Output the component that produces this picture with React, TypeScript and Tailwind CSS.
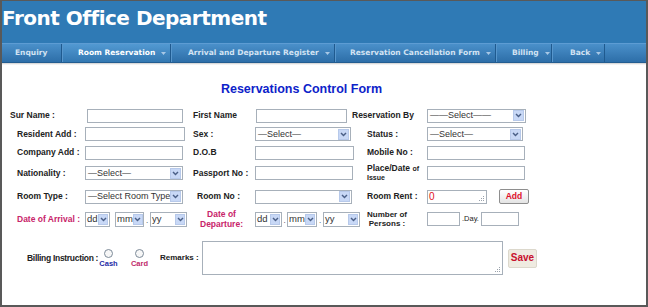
import React from "react";

const navItems = [
  { label: "Enquiry", w: "w-[60px] pl-[13px]", arrow: false, active: false, first: true },
  { label: "Room Reservation", w: "w-[109px] pl-[15px]", arrow: true, active: true, first: false },
  { label: "Arrival and Departure Register", w: "w-[164px] pl-[16px]", arrow: true, active: false, first: false },
  { label: "Reservation Cancellation Form", w: "w-[161px] pl-[14px]", arrow: true, active: false, first: false },
  { label: "Billing", w: "w-[56px] pl-[15px]", arrow: true, active: false, first: false },
  { label: "Back", w: "w-[53px] pl-[17px]", arrow: true, active: false, first: false },
];

const Chevron = () => (
  <svg width="7" height="5" viewBox="0 0 7 5">
    <path d="M1 1 L3.5 3.6 L6 1" fill="none" stroke="#4a5f86" strokeWidth="1.4" />
  </svg>
);

const Grip = () => (
  <svg width="6" height="6" viewBox="0 0 6 6" className="absolute bottom-[1px] right-[1px]">
    <rect x="4" y="0" width="1" height="1" fill="#9aa2ac" />
    <rect x="2" y="2" width="1" height="1" fill="#9aa2ac" />
    <rect x="4" y="2" width="1" height="1" fill="#9aa2ac" />
    <rect x="0" y="4" width="1" height="1" fill="#9aa2ac" />
    <rect x="2" y="4" width="1" height="1" fill="#9aa2ac" />
    <rect x="4" y="4" width="1" height="1" fill="#9aa2ac" />
  </svg>
);

const L = ({ children, className = "" }: { children: React.ReactNode; className?: string }) => (
  <div className={`shrink-0 whitespace-nowrap text-[8.5px] font-bold leading-none text-[#222] ${className}`}>{children}</div>
);

const Input = ({ className = "" }: { className?: string }) => (
  <input
    type="text"
    readOnly
    className={`h-[14px] shrink-0 border border-[#a7b0ba] bg-white outline-none ${className}`}
  />
);

const Select = ({ text, className = "" }: { text: string; className?: string }) => (
  <div className={`flex h-[14px] shrink-0 items-center border border-[#a7b0ba] bg-white ${className}`}>
    <span className="flex-1 overflow-hidden whitespace-nowrap pl-[2px] text-[9px] leading-none text-[#333]">{text}</span>
    <span className="mr-px flex h-[11px] w-[11px] shrink-0 items-center justify-center border border-[#b7c9ea] bg-[#c8d8f6]">
      <Chevron />
    </span>
  </div>
);

const DateSelect = ({ text, className = "" }: { text: string; className?: string }) => (
  <div className={`flex h-[15px] shrink-0 items-center border border-[#a7b0ba] bg-white ${className}`}>
    <span className="flex-1 whitespace-nowrap pl-[1px] text-[9.5px] leading-none text-[#333]">{text}</span>
    <span className="mr-px flex h-[11px] w-[10px] shrink-0 items-center justify-center border border-[#b7c9ea] bg-[#c8d8f6]">
      <Chevron />
    </span>
  </div>
);

const Dot = ({ className = "" }: { className?: string }) => (
  <span className={`shrink-0 self-end pb-[4px] text-center text-[8px] leading-none text-[#333] ${className}`}>.</span>
);

export default function App() {
  return (
    <div className="h-[307px] w-[648px] overflow-hidden border-x-2 border-t border-b-2 border-[#595959] bg-white font-['Liberation_Sans',Arial,sans-serif]">
      {/* Header */}
      <div className="h-[42px] bg-[#2f7ab5] pt-[7px]">
        <h1 className="font-['DejaVu_Sans',Verdana,sans-serif] text-[20px] font-bold leading-[20px] tracking-[-0.5px] text-white">
          Front Office Department
        </h1>
      </div>

      {/* Menu */}
      <div className="flex h-[20px] border-t border-b border-t-[#5d9cd3] border-b-[#235d91] bg-linear-to-b from-[#4a90ca] to-[#2d6ea8] font-['DejaVu_Sans',Verdana,sans-serif]">
        {navItems.map((n) => (
          <div
            key={n.label}
            className={`flex h-full shrink-0 items-center gap-[6px] border-r border-r-[#1f5a8f] ${n.w} ${
              n.first ? "" : "border-l border-l-[#5796cc]"
            } ${n.active ? "bg-linear-to-b from-[#5299d2] to-[#3378b2] text-white" : "text-[#d3e3f3]"}`}
          >
            <span className="whitespace-nowrap text-[7.5px] font-bold leading-none">{n.label}</span>
            {n.arrow && (
              <svg width="5" height="3" viewBox="0 0 5 3">
                <path d="M0 0 H5 L2.5 3 Z" fill="#a8c8e6" />
              </svg>
            )}
          </div>
        ))}
      </div>
      <div className="h-[2px] bg-linear-to-b from-[#cdcdcd] to-white" />

      {/* Body */}
      <div className="pt-[17px]">
        <div className="w-[599px] text-center text-[12.5px] font-bold leading-[14px] text-[#0d22c9]">
          Reservations Control Form
        </div>

        <div className="mt-[10px]">
          {/* Row 1 */}
          <div className="flex h-[19px] items-center pl-[8px]">
            <L className="w-[77px]">Sur Name :</L>
            <Input className="w-[96px]" />
            <L className="ml-[10px] w-[63px]">First Name</L>
            <Input className="w-[91px]" />
            <L className="ml-[5px] w-[75px]">Reservation By</L>
            <Select text="——Select——" className="w-[99px]" />
          </div>

          {/* Row 2 */}
          <div className="flex h-[18px] items-center pl-[15px]">
            <L className="w-[68px]">Resident Add :</L>
            <Input className="w-[100px]" />
            <L className="ml-[8px] w-[62px]">Sex :</L>
            <Select text="—Select—" className="w-[96px]" />
            <L className="ml-[16px] w-[60px]">Status :</L>
            <Select text="—Select—" className="w-[96px]" />
          </div>

          {/* Row 3 */}
          <div className="flex h-[19px] items-center pl-[15px]">
            <L className="w-[68px]">Company Add :</L>
            <Input className="w-[98px]" />
            <L className="ml-[10px] w-[62px]">D.O.B</L>
            <Input className="w-[99px]" />
            <L className="ml-[13px] w-[60px]">Mobile No :</L>
            <Input className="w-[98px]" />
          </div>

          {/* Row 4 */}
          <div className="flex h-[22px] items-center pl-[15px]">
            <L className="w-[68px]">Nationality :</L>
            <Select text="—Select—" className="w-[98px]" />
            <L className="ml-[10px] w-[62px]">Passport No :</L>
            <Input className="w-[98px]" />
            <L className="ml-[14px] w-[60px]">
              <div className="leading-[9px]">
                Place/Date <span className="text-[7px]">of</span>
              </div>
              <div className="text-[7px] leading-[10px]">Issue</div>
            </L>
            <Input className="w-[98px]" />
          </div>

          {/* Row 5 */}
          <div className="flex h-[25px] items-center pl-[15px]">
            <L className="w-[68px] text-[#2a36b6]">Room Type :</L>
            <Select text="—Select Room Type—" className="w-[98px]" />
            <L className="ml-[14px] w-[58px]">Room No :</L>
            <Select text="" className="w-[97px]" />
            <L className="ml-[15px] w-[60px]">Room Rent :</L>
            <div className="relative h-[14px] w-[60px] shrink-0 border border-[#a7b0ba] bg-white pl-[1px] text-[10px] leading-[12px] text-[#e0101c]">
              0
              <Grip />
            </div>
            <button className="ml-[12px] h-[15px] w-[30px] shrink-0 rounded-[2px] border border-[#8e8e8e] bg-linear-to-b from-white to-[#e4e4e4] text-[8.5px] font-bold leading-none text-[#e0102a]">
              Add
            </button>
          </div>

          {/* Row 6 */}
          <div className="flex h-[20px] items-center pl-[15px]">
            <L className="w-[68px] text-[#c8246a]">Date of Arrival :</L>
            <DateSelect text="dd" className="w-[25px]" />
            <DateSelect text="mm" className="ml-[5px] w-[29px]" />
            <Dot className="w-[6px]" />
            <DateSelect text="yy" className="w-[37px]" />
            <L className="ml-[13px] w-[43px] text-center text-[#c8246a]">
              <div className="leading-[10px]">Date of</div>
              <div className="leading-[10px]">Departure:</div>
            </L>
            <DateSelect text="dd" className="ml-[12px] w-[27px]" />
            <Dot className="w-[5px]" />
            <DateSelect text="mm" className="w-[30px]" />
            <Dot className="w-[6px]" />
            <DateSelect text="yy" className="w-[37px]" />
            <L className="ml-[7px] w-[60px] text-[8px]">
              <div className="w-[40px] text-center">
                <div className="leading-[9px]">Number of</div>
                <div className="leading-[9px]">Persons :</div>
              </div>
            </L>
            <Input className="w-[33px]" />
            <span className="w-[21px] shrink-0 pl-[2px] text-[7.5px] leading-none text-[#222]">.Day.</span>
            <Input className="w-[38px]" />
          </div>

          {/* Billing row */}
          <div className="mt-[12px] flex h-[34px] items-center pl-[25px]">
            <L className="w-[72px] text-[7px] tracking-[-0.3px]">Billing Instruction :</L>
            <div className="flex w-[19px] shrink-0 flex-col items-center gap-[1px]">
              <span className="h-[9px] w-[9px] rounded-full border border-[#7d8b99] bg-[#f7f7f7]" />
              <span className="text-[7.5px] font-bold leading-[9px] text-[#1d2aa6]">Cash</span>
            </div>
            <div className="ml-[14px] flex w-[15px] shrink-0 flex-col items-center gap-[1px]">
              <span className="h-[9px] w-[9px] rounded-full border border-[#7d8b99] bg-[#f7f7f7]" />
              <span className="text-[7.5px] font-bold leading-[9px] text-[#c02a6a]">Card</span>
            </div>
            <L className="ml-[13px] w-[42px] text-[8px]">Remarks :</L>
            <div className="relative h-[34px] w-[301px] shrink-0 border border-[#a7b0ba] bg-white">
              <Grip />
            </div>
            <button className="ml-[5px] h-[19px] w-[29px] shrink-0 rounded-[2px] border border-[#dcd8cc] bg-[#efebe1] text-[10px] font-bold leading-none text-[#c8102e]">
              Save
            </button>
          </div>
        </div>
      </div>
    </div>
  );
}
